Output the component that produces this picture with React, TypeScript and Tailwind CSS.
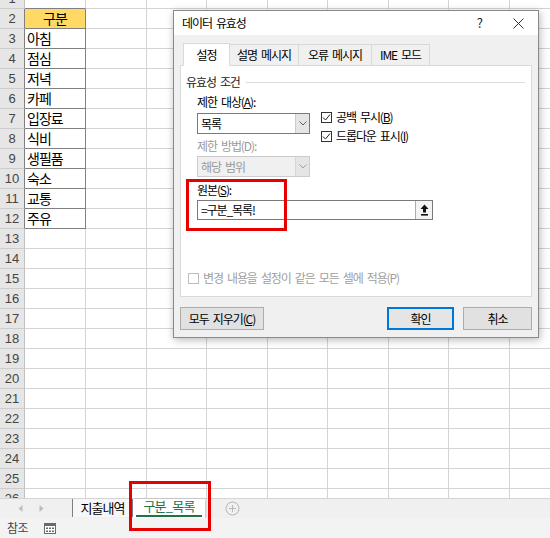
import React from 'react';

const COLS = [61, 61, 60, 61, 60, 61, 60, 61, 60];
const A_DATA: Record<number, string> = {
  2: '구분',
  3: '아침',
  4: '점심',
  5: '저녁',
  6: '카페',
  7: '입장료',
  8: '식비',
  9: '생필품',
  10: '숙소',
  11: '교통',
  12: '주유',
};
const ROWS = Array.from({ length: 26 }, (_, i) => i + 1);

const FONT = { fontFamily: '"Noto Sans CJK KR", "Noto Sans", sans-serif' };

function Row({ n }: { n: number }) {
  const inA = n >= 2 && n <= 12;
  return (
    <div className="flex h-[20px] shrink-0">
      <div
        className={`w-[25px] shrink-0 bg-[#e6e6e6] border-b border-b-[#cdcdcd] border-r ${
          inA ? 'border-r-[#808080]' : 'border-r-[#c0c0c0]'
        } flex items-center justify-center text-[13px] text-[#444]`}
        style={{ fontFamily: '"Liberation Sans", Arial, sans-serif' }}
      >
        {n}
      </div>
      {COLS.map((w, i) => {
        if (i === 0) {
          const bCls = inA
            ? 'border-r-[#808080] border-b-[#808080]'
            : n === 1
            ? 'border-r-[#d4d4d4] border-b-[#808080]'
            : 'border-r-[#d4d4d4] border-b-[#d4d4d4]';
          return (
            <div
              key={i}
              className={`shrink-0 border-r border-b ${bCls} ${
                n === 2 ? 'bg-[#ffd966] justify-center' : 'bg-white pl-[2px]'
              } flex items-center text-[14px] tracking-[-1px] text-black`}
              style={{ width: w }}
            >
              {A_DATA[n] ?? ''}
            </div>
          );
        }
        return (
          <div
            key={i}
            className="shrink-0 border-r border-b border-r-[#d4d4d4] border-b-[#d4d4d4] bg-white"
            style={{ width: w }}
          />
        );
      })}
    </div>
  );
}

function Chevron({ color }: { color: string }) {
  return (
    <svg width="8" height="5" viewBox="0 0 8 5">
      <path d="M0.5 0.5 L4 4 L7.5 0.5" fill="none" stroke={color} strokeWidth="1" />
    </svg>
  );
}

function Check({ checked, disabled, label }: { checked: boolean; disabled?: boolean; label: React.ReactNode }) {
  return (
    <div className="flex items-center h-[14px]">
      <div
        className={`w-[11px] h-[11px] border bg-white flex items-center justify-center ${
          disabled ? 'border-[#bcbcbc]' : 'border-[#333]'
        }`}
      >
        {checked && (
          <svg width="9" height="9" viewBox="0 0 9 9">
            <path d="M1 4.5 L3.5 7 L8 1.5" fill="none" stroke="#222" strokeWidth="1" />
          </svg>
        )}
      </div>
      <span className={`ml-[4px] leading-[14px] ${disabled ? 'text-[#a0a0a0]' : 'text-black'}`}>{label}</span>
    </div>
  );
}

function Dialog() {
  return (
    <div
      className="absolute left-[173px] top-[10px] w-[366px] h-[328px] border border-[#8a8a8a] bg-[#f0f0f0] shadow-[1px_2px_8px_rgba(0,0,0,0.28)] flex flex-col text-[12px] tracking-[-1.1px] [word-spacing:2.5px] text-black"
      style={FONT}
    >
      {/* title bar */}
      <div className="h-[24px] shrink-0 bg-white flex items-center pl-[8px]">
        <span className="leading-[14px]">데이터 유효성</span>
        <span className="ml-auto text-[13px] tracking-normal text-[#222] mr-[30px]">?</span>
        <svg width="11" height="11" viewBox="0 0 11 11" className="mr-[14px]">
          <path d="M0.5 0.5 L10.5 10.5 M10.5 0.5 L0.5 10.5" stroke="#333" strokeWidth="1" />
        </svg>
      </div>

      <div className="flex-1 flex flex-col px-[6px]">
        {/* tabs */}
        <div className="mt-[8px] h-[22px] shrink-0 flex items-end pl-[3px] relative z-10">
          <div className="h-[23px] w-[47px] mb-[-1px] bg-white border border-[#d9d9d9] border-b-white flex items-center justify-center">
            설정
          </div>
          <div className="h-[21px] w-[69px] bg-[#f0f0f0] border border-[#d9d9d9] border-l-0 border-b-0 flex items-center justify-center">
            설명 메시지
          </div>
          <div className="h-[21px] w-[73px] bg-[#f0f0f0] border border-[#d9d9d9] border-l-0 border-b-0 flex items-center justify-center">
            오류 메시지
          </div>
          <div className="h-[21px] w-[58px] bg-[#f0f0f0] border border-[#d9d9d9] border-l-0 border-b-0 flex items-center justify-center">
            IME 모드
          </div>
        </div>

        {/* panel */}
        <div className="h-[232px] shrink-0 bg-white border border-[#d9d9d9] flex flex-col pl-[5px] pr-[6px]">
          <div className="mt-[9px] h-[14px] flex items-center">
            <span className="leading-[14px] text-[#222]">유효성 조건</span>
            <div className="flex-1 ml-[6px] h-px bg-[#dcdcdc]" />
          </div>

          <div className="flex ml-[11px]">
            <div className="flex flex-col w-[113px]">
              <div className="mt-[6px] leading-[14px] h-[14px]">
                제한 대상(<u>A</u>):
              </div>
              <div className="mt-[4px] h-[21px] border border-[#7a7a7a] flex bg-white">
                <div className="flex-1 flex items-center pl-[3px]">목록</div>
                <div className="w-[14px] bg-[#e5e5e5] border-l border-[#cccccc] flex items-center justify-center">
                  <Chevron color="#606060" />
                </div>
              </div>
              <div className="mt-[5px] leading-[14px] h-[14px] text-[#9a9a9a]">제한 방법(D):</div>
              <div className="mt-[3px] h-[21px] border border-[#cccccc] flex bg-[#f0f0f0]">
                <div className="flex-1 flex items-center pl-[3px] text-[#9a9a9a]">해당 범위</div>
                <div className="w-[14px] bg-[#e5e5e5] border-l border-[#d5d5d5] flex items-center justify-center">
                  <Chevron color="#a0a0a0" />
                </div>
              </div>
            </div>
            <div className="flex flex-col ml-[11px] mt-[21px]">
              <Check
                checked
                label={
                  <>
                    공백 무시(<u>B</u>)
                  </>
                }
              />
              <div className="mt-[5px]">
                <Check
                  checked
                  label={
                    <>
                      드롭다운 표시(<u>I</u>)
                    </>
                  }
                />
              </div>
            </div>
          </div>

          <div className="ml-[11px] mt-[6px] leading-[14px] h-[14px]">
            원본(<u>S</u>):
          </div>
          <div className="ml-[11px] mt-[3px] w-[236px] h-[20px] border border-[#7a7a7a] flex bg-white">
            <div className="flex-1 flex items-center pl-[3px]">=구분_목록!</div>
            <div className="w-[17px] border-l border-[#adadad] bg-[#f3f3f3] flex items-center justify-center">
              <svg width="9" height="12" viewBox="0 0 9 12">
                <path d="M4.5 0.5 L8.5 5 L6 5 L6 8.5 L3 8.5 L3 5 L0.5 5 Z" fill="#111" />
                <rect x="1" y="10" width="7" height="1.6" fill="#111" />
              </svg>
            </div>
          </div>

          <div className="mt-[51px] ml-[2px]">
            <Check checked={false} disabled label="변경 내용을 설정이 같은 모든 셀에 적용(P)" />
          </div>
        </div>

        {/* buttons */}
        <div className="mt-[10px] h-[23px] shrink-0 flex">
          <div className="w-[84px] border border-[#adadad] bg-[#e1e1e1] flex items-center justify-center">
            모두 지우기(<u>C</u>)
          </div>
          <div className="ml-auto w-[67px] border-2 border-[#0078d7] bg-[#e5e5e5] flex items-center justify-center">
            확인
          </div>
          <div className="ml-[9px] w-[69px] border border-[#adadad] bg-[#e1e1e1] flex items-center justify-center">
            취소
          </div>
        </div>
      </div>

      {/* red highlight box on source */}
      <div className="absolute left-[12px] top-[168px] w-[101px] h-[52px] border-[3px] border-[#e60000] pointer-events-none" />
    </div>
  );
}

export default function App() {
  return (
    <div className="relative w-[550px] h-[538px] overflow-hidden bg-white flex flex-col" style={FONT}>
      <div className="h-[498px] shrink-0 overflow-hidden flex flex-col">
        <div className="mt-[-11px] flex flex-col">
          {ROWS.map((n) => (
            <Row key={n} n={n} />
          ))}
        </div>
      </div>

      {/* sheet tab bar */}
      <div className="h-[20px] shrink-0 bg-[#f0f0f0] border-t border-[#d4d4d4] flex items-stretch">
        <div className="w-[72px] shrink-0 flex items-center">
          <svg width="5" height="7" viewBox="0 0 5 7" className="ml-[18px]">
            <path d="M4.5 0 L0.5 3.5 L4.5 7 Z" fill="#bdbdbd" />
          </svg>
          <svg width="5" height="7" viewBox="0 0 5 7" className="ml-[16px]">
            <path d="M0.5 0 L4.5 3.5 L0.5 7 Z" fill="#bdbdbd" />
          </svg>
        </div>
        <div className="w-[61px] shrink-0 border-l border-r border-[#7f7f7f] bg-[#f7f7f7] flex items-center justify-center text-[13px] leading-[16px] tracking-[-1px] text-black mb-[1px]">
          지출내역
        </div>
        <div className="w-[72px] shrink-0 bg-white flex flex-col shadow-[1px_0_2px_rgba(0,0,0,0.2)]">
          <div className="h-[14px] flex items-start justify-center text-[13px] leading-[13px] tracking-[-0.8px] text-[#217346]">
            구분_목록
          </div>
          <div className="mt-auto h-[2px] bg-[#217346] mx-[3px] mb-[1px]" />
        </div>
        <div className="flex items-center ml-[20px]">
          <svg width="15" height="15" viewBox="0 0 15 15">
            <circle cx="7.5" cy="7.5" r="6.5" fill="none" stroke="#b8b8b8" strokeWidth="1" />
            <path d="M7.5 4 L7.5 11 M4 7.5 L11 7.5" stroke="#b8b8b8" strokeWidth="1" />
          </svg>
        </div>
      </div>

      {/* status bar */}
      <div className="h-[20px] shrink-0 bg-[#f3f3f3] flex items-center">
        <span className="ml-[7px] text-[12px] tracking-[-0.5px] text-[#444]">참조</span>
        <svg width="12" height="11" viewBox="0 0 12 11" className="ml-[16px]">
          <rect x="0.5" y="0.5" width="11" height="10" fill="#fff" stroke="#6a6a6a" />
          <rect x="0.5" y="0.5" width="11" height="2.5" fill="#6a6a6a" />
          <rect x="2" y="4.5" width="2" height="1.5" fill="#6a6a6a" />
          <rect x="5" y="4.5" width="2" height="1.5" fill="#6a6a6a" />
          <rect x="8" y="4.5" width="2" height="1.5" fill="#6a6a6a" />
          <rect x="2" y="7.5" width="2" height="1.5" fill="#6a6a6a" />
          <rect x="5" y="7.5" width="2" height="1.5" fill="#6a6a6a" />
          <rect x="8" y="7.5" width="2" height="1.5" fill="#6a6a6a" />
        </svg>
      </div>

      <Dialog />

      {/* red highlight box on sheet tab */}
      <div className="absolute left-[129px] top-[481px] w-[82px] h-[50px] border-[3px] border-[#e60000] pointer-events-none" />
    </div>
  );
}
